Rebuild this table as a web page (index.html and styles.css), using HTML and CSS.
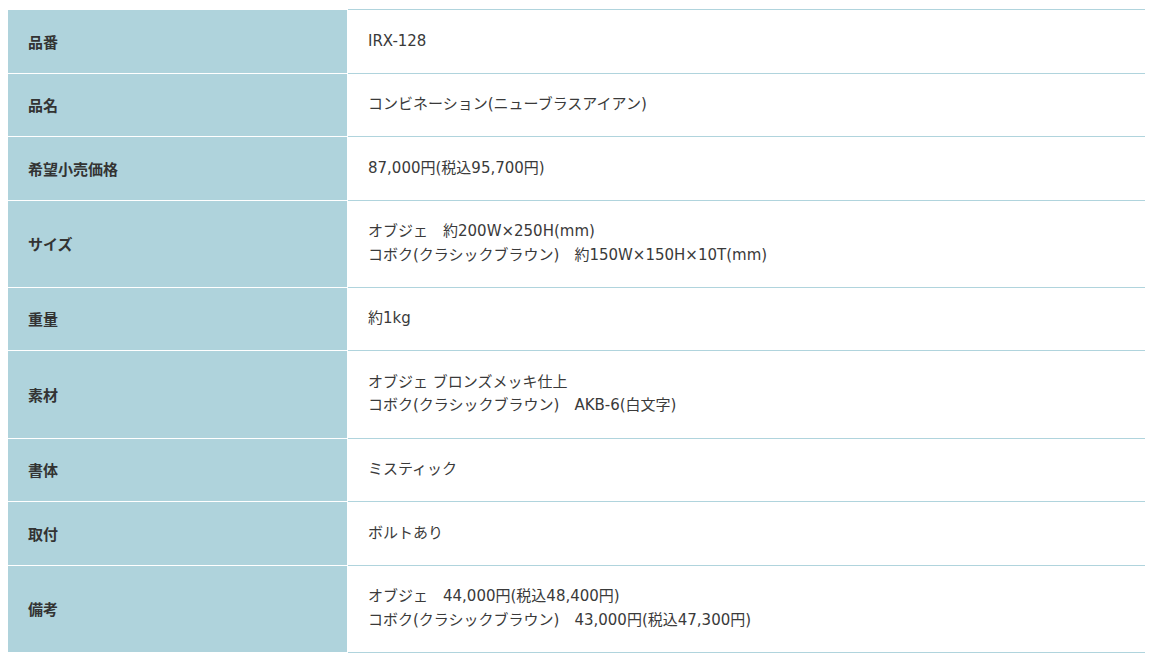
FILE: index.html
```html
<!DOCTYPE html>
<html lang="ja">
<head>
<meta charset="utf-8">
<link rel="stylesheet" href="styles.css">
</head>
<body>
<table class="spec">
  <tr><th>品番</th><td>IRX-128</td></tr>
  <tr><th>品名</th><td>コンビネーション(ニューブラスアイアン)</td></tr>
  <tr><th>希望小売価格</th><td>87,000円(税込95,700円)</td></tr>
  <tr><th>サイズ</th><td>オブジェ　約200W×250H(mm)<br>コボク(クラシックブラウン)　約150W×150H×10T(mm)</td></tr>
  <tr><th>重量</th><td>約1kg</td></tr>
  <tr><th>素材</th><td>オブジェ ブロンズメッキ仕上<br>コボク(クラシックブラウン)　AKB-6(白文字)</td></tr>
  <tr><th>書体</th><td>ミスティック</td></tr>
  <tr><th>取付</th><td>ボルトあり</td></tr>
  <tr><th>備考</th><td>オブジェ　44,000円(税込48,400円)<br>コボク(クラシックブラウン)　43,000円(税込47,300円)</td></tr>
</table>
</body>
</html>
```

FILE: styles.css
```css
html, body {
  background: #fff;
}
body {
  margin: 8px;
  padding-top: 1px;
  font-family: "DejaVu Sans", "Noto Sans CJK JP", sans-serif;
  font-size: 15px;
  color: #333;
}
.spec {
  width: calc(100% + 2px);
  border-collapse: separate;
  border-spacing: 0;
}
.spec th,
.spec td {
  padding: 19.5px 20px;
  line-height: 23.56px;
  vertical-align: middle;
  text-align: left;
}
.spec th {
  width: 340px;
  box-sizing: border-box;
  background: #afd3dc;
  border-bottom: 1px solid #fff;
  border-right: 1px solid #fff;
  font-family: "Noto Sans CJK JP", sans-serif;
  font-weight: bold;
  color: #333;
}
.spec td {
  border-bottom: 1px solid #b0d4dd;
  border-right: 1px solid #b0d4dd;
  color: #3a3a3a;
  font-weight: normal;
}
.spec tr:first-child th {
  border-top: 1px solid #fff;
}
.spec tr:first-child td {
  border-top: 1px solid #b0d4dd;
}
```
